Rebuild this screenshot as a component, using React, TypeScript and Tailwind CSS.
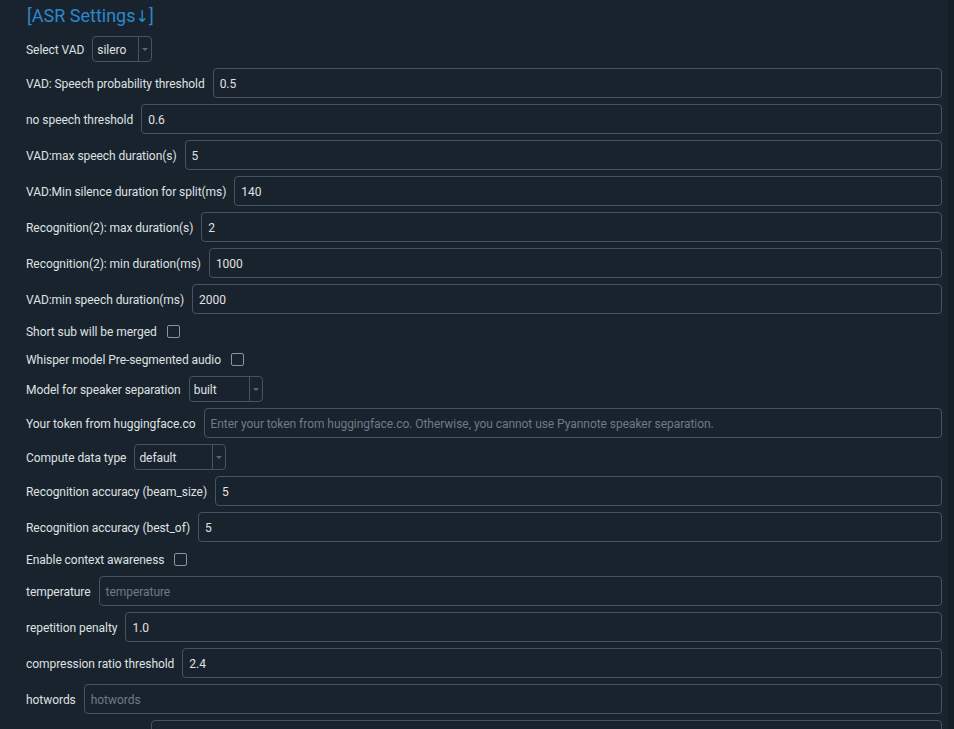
type Row =
  | { kind: 'input'; label: string; value?: string; placeholder?: string }
  | { kind: 'combo'; label: string; value: string; width: string }
  | { kind: 'check'; label: string };

const ROWS: Row[] = [
  { kind: 'combo', label: 'Select VAD', value: 'silero', width: 'w-[60px]' },
  { kind: 'input', label: 'VAD: Speech probability threshold', value: '0.5' },
  { kind: 'input', label: 'no speech threshold', value: '0.6' },
  { kind: 'input', label: 'VAD:max speech duration(s)', value: '5' },
  { kind: 'input', label: 'VAD:Min silence duration for split(ms)', value: '140' },
  { kind: 'input', label: 'Recognition(2): max duration(s)', value: '2' },
  { kind: 'input', label: 'Recognition(2): min duration(ms)', value: '1000' },
  { kind: 'input', label: 'VAD:min speech duration(ms)', value: '2000' },
  { kind: 'check', label: 'Short sub will be merged' },
  { kind: 'check', label: 'Whisper model Pre-segmented audio' },
  { kind: 'combo', label: 'Model for speaker separation', value: 'built', width: 'w-[74px]' },
  {
    kind: 'input',
    label: 'Your token from huggingface.co',
    placeholder: 'Enter your token from huggingface.co. Otherwise, you cannot use Pyannote speaker separation.',
  },
  { kind: 'combo', label: 'Compute data type', value: 'default', width: 'w-[92px]' },
  { kind: 'input', label: 'Recognition accuracy (beam_size)', value: '5' },
  { kind: 'input', label: 'Recognition accuracy (best_of)', value: '5' },
  { kind: 'check', label: 'Enable context awareness' },
  { kind: 'input', label: 'temperature', placeholder: 'temperature' },
  { kind: 'input', label: 'repetition penalty', value: '1.0' },
  { kind: 'input', label: 'compression ratio threshold', value: '2.4' },
  { kind: 'input', label: 'hotwords', placeholder: 'hotwords' },
];

function Combo({ value, width }: { value: string; width: string }) {
  return (
    <div className={`${width} h-[26px] flex items-stretch rounded-[4px] border border-[#455364]`}>
      <span className="flex-1 flex items-center pl-[4px] pt-[1px] text-[#e0e1e3]">{value}</span>
      <span className="w-[13px] border-l border-[#455364] flex items-center justify-center">
        <span className="w-0 h-0 border-l-[3px] border-r-[3px] border-t-[3px] border-l-transparent border-r-transparent border-t-[#5b6775]" />
      </span>
    </div>
  );
}

export default function App() {
  return (
    <div className="h-[729px] overflow-hidden bg-[#19232d] flex" style={{ fontFamily: 'Roboto, "Noto Sans", sans-serif' }}>
      <div className="flex-1 pl-[26px] pr-[6px] pt-[3px] text-[12px] tracking-[-0.05px] text-[#dfe1e2]">
        <h1 className="h-[26px] overflow-hidden text-[18px] leading-[26px] tracking-normal text-[#2a88cf] mb-[7px] pl-[1px]">
          [ASR Settings
          <span style={{ fontFamily: '"DejaVu Sans", sans-serif' }} className="text-[16px] leading-none">↓</span>]
        </h1>

        <div className="flex flex-col gap-[6px]">
          {ROWS.map((r) => (
            <div
              key={r.label}
              className={
                r.kind === 'input'
                  ? 'flex items-center gap-[8px] h-[30px]'
                  : r.kind === 'combo'
                  ? 'flex items-center gap-[8px] h-[26px]'
                  : 'flex items-center gap-[10px] h-[22px]'
              }
            >
              <span className="whitespace-nowrap pt-[1px]">{r.label}</span>
              {r.kind === 'input' && (
                <div className="flex-1 h-[30px] rounded-[4px] border border-[#455364] flex items-center pl-[6px] pt-[1px]">
                  {r.value ? (
                    <span className="text-[#e0e1e3]">{r.value}</span>
                  ) : (
                    <span className="text-[#6f7a86] whitespace-nowrap">{r.placeholder}</span>
                  )}
                </div>
              )}
              {r.kind === 'combo' && <Combo value={r.value} width={r.width} />}
              {r.kind === 'check' && (
                <span className="w-[13px] h-[13px] rounded-[2px] border border-[#8b949d]" />
              )}
            </div>
          ))}

          {/* next row, label is below the fold */}
          <div className="flex items-center gap-[8px] h-[30px]">
            <span className="w-[117px]" />
            <div className="flex-1 h-[30px] rounded-[4px] border border-[#455364]" />
          </div>
        </div>
      </div>
      <div className="w-[6px] bg-[#151e27]" />
    </div>
  );
}
